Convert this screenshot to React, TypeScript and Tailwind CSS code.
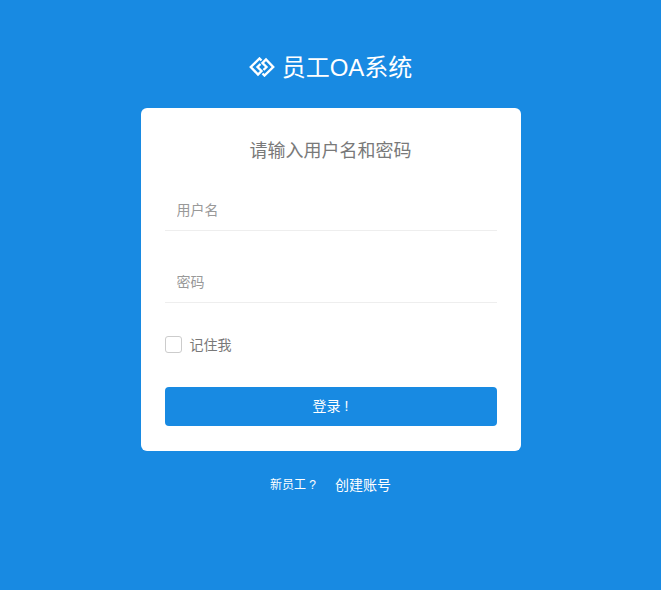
const FONT = "font-['Liberation_Sans','Noto_Sans_CJK_SC',sans-serif]"

function Logo() {
  return (
    <svg width="26" height="20" viewBox="0 0 26 20" fill="none" stroke="white" strokeWidth="2.4" className="shrink-0">
      <path d="M12.5 3.5 L10.5 1.5 L1.8 10 L9 17.5 L12.5 14 L8.5 10 L11.5 7" />
      <path d="M13.5 16.5 L15.5 18.5 L24.2 10 L17 2.5 L13.5 6 L17.5 10 L14.5 13" />
    </svg>
  )
}

function Field({ placeholder, type = 'text' }: { placeholder: string; type?: string }) {
  return (
    <input
      type={type}
      placeholder={placeholder}
      className="block w-full h-[39px] px-3 pb-[2px] text-sm text-[#797979] placeholder:text-[#999999] border-b border-[#eeeeee] outline-none bg-transparent"
    />
  )
}

export default function App() {
  return (
    <div className={`${FONT} min-h-[590px] bg-[#188ae2] flex flex-col items-center pt-[51px]`}>
      <div className="flex items-center gap-[7px] h-[32px] text-white text-2xl">
        <Logo />
        <span className="pt-[1px]">员工OA系统</span>
      </div>

      <div className="mt-[25px] w-[380px] h-[343px] bg-white rounded-md px-6 pt-[31px]">
        <h2 className="text-center text-lg leading-[24px] text-[#797979]">请输入用户名和密码</h2>

        <div className="mt-[28px] pt-[1px]">
          <Field placeholder="用户名" />
        </div>
        <div className="mt-[33px]">
          <Field placeholder="密码" type="password" />
        </div>

        <label className="mt-[31px] flex items-center gap-2 h-[20px] text-sm text-[#797979]">
          <span className="w-[17px] h-[17px] rounded-[3px] border border-[#cccccc] bg-white" />
          <span className="pt-[1px]">记住我</span>
        </label>

        <button className="mt-[33px] block w-full h-[39px] pb-[2px] rounded bg-[#188ae2] text-white text-sm">登录 !</button>
      </div>

      <div className="mt-[24px] flex items-center h-[20px] text-white">
        <span className="text-xs">新员工 ?</span>
        <a className="ml-[19px] text-sm">创建账号</a>
      </div>
    </div>
  )
}
